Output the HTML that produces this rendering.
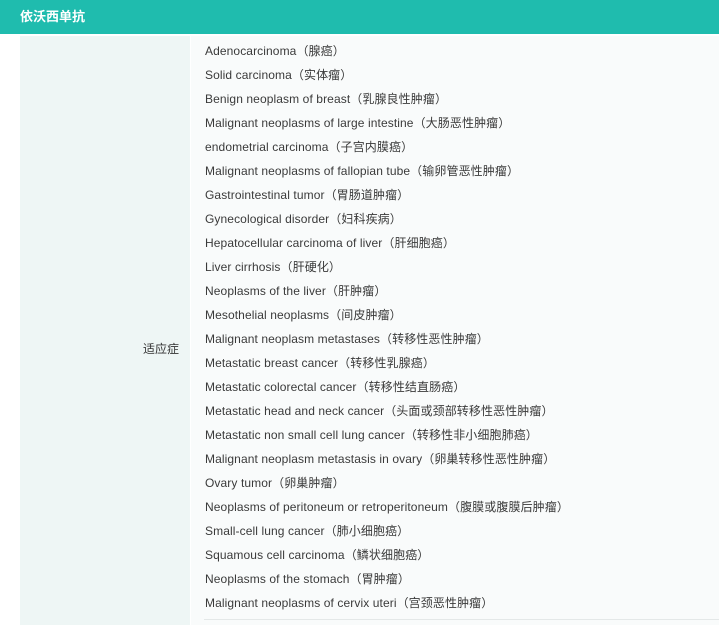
<!DOCTYPE html>
<html><head><meta charset="utf-8"><style>
body{margin:0;width:719px;height:625px;background:#fff;overflow:hidden;font-family:"Liberation Sans","Noto Sans CJK SC",sans-serif;}
.hd{position:absolute;left:0;top:0;width:719px;height:34px;background:#1fbcae;color:#fff;font-weight:bold;font-size:13px;line-height:34px;padding-left:20px;box-sizing:border-box;}
.l{position:absolute;left:20px;top:36px;width:170px;height:589px;background:#eef6f5;}
.lt{position:absolute;left:143px;top:340px;font-size:12px;color:#333;}
.r{position:absolute;left:191px;top:36px;width:528px;height:589px;background:#f9fbfb;}
.r div{position:absolute;left:14px;font-size:12px;color:#3a3a3a;white-space:nowrap;height:24px;line-height:24px;letter-spacing:0.1px;}
.ln{position:absolute;left:204px;top:619px;width:515px;height:1px;background:#e4e8e8;}
</style></head><body>
<div class="hd">依沃西单抗</div>
<div class="l"></div><div class="lt">适应症</div>
<div class="r" id="r"></div>
<div class="ln"></div>
<script>
var t=["Adenocarcinoma（腺癌）","Solid carcinoma（实体瘤）","Benign neoplasm of breast（乳腺良性肿瘤）","Malignant neoplasms of large intestine（大肠恶性肿瘤）","endometrial carcinoma（子宫内膜癌）","Malignant neoplasms of fallopian tube（输卵管恶性肿瘤）","Gastrointestinal tumor（胃肠道肿瘤）","Gynecological disorder（妇科疾病）","Hepatocellular carcinoma of liver（肝细胞癌）","Liver cirrhosis（肝硬化）","Neoplasms of the liver（肝肿瘤）","Mesothelial neoplasms（间皮肿瘤）","Malignant neoplasm metastases（转移性恶性肿瘤）","Metastatic breast cancer（转移性乳腺癌）","Metastatic colorectal cancer（转移性结直肠癌）","Metastatic head and neck cancer（头面或颈部转移性恶性肿瘤）","Metastatic non small cell lung cancer（转移性非小细胞肺癌）","Malignant neoplasm metastasis in ovary（卵巢转移性恶性肿瘤）","Ovary tumor（卵巢肿瘤）","Neoplasms of peritoneum or retroperitoneum（腹膜或腹膜后肿瘤）","Small-cell lung cancer（肺小细胞癌）","Squamous cell carcinoma（鳞状细胞癌）","Neoplasms of the stomach（胃肿瘤）","Malignant neoplasms of cervix uteri（宫颈恶性肿瘤）"];
var r=document.getElementById('r');t.forEach(function(s,i){var d=document.createElement('div');d.textContent=s;d.style.top=(3+24*i)+'px';r.appendChild(d);});
</script>
</body></html>
